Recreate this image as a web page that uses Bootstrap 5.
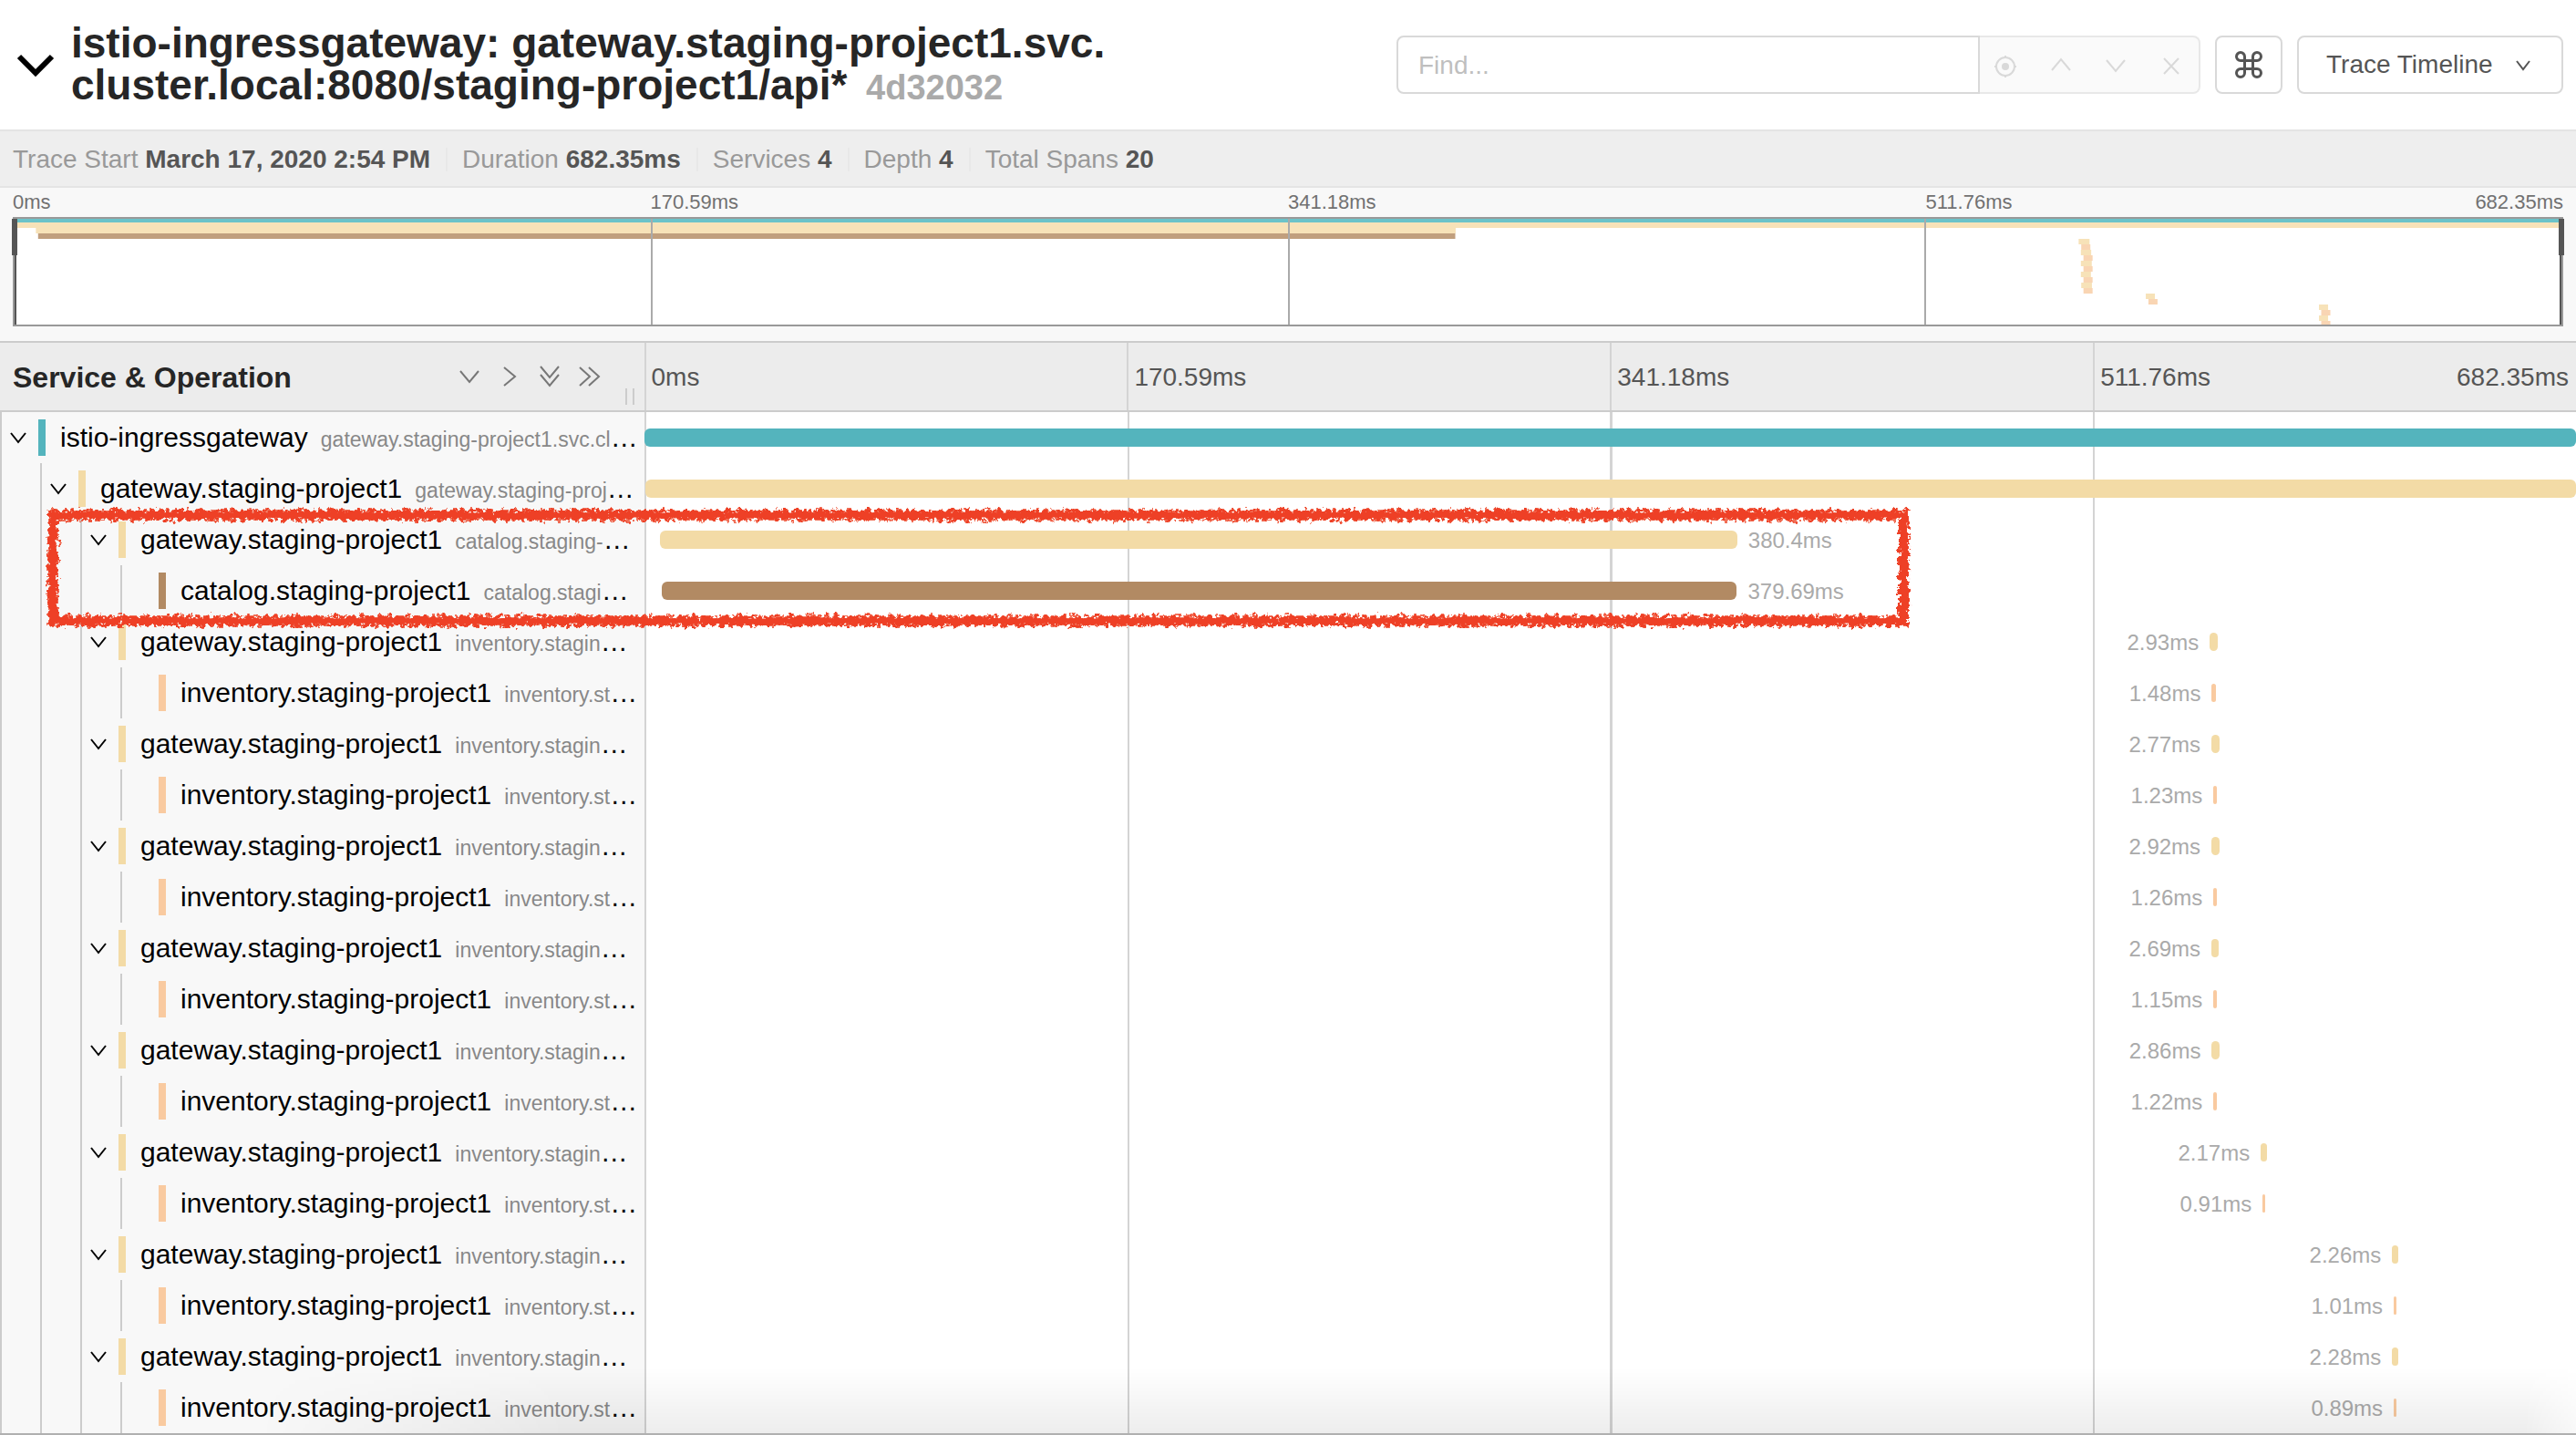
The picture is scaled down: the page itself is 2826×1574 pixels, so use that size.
<!DOCTYPE html>
<html lang="en">
<head>
<meta charset="utf-8">
<meta name="viewport" content="width=device-width, initial-scale=1">
<title>Trace Timeline</title>
<link href="https://cdn.jsdelivr.net/npm/bootstrap@5.3.0/dist/css/bootstrap.min.css" rel="stylesheet">
<style>
  body { font-family: "Liberation Sans", Arial, sans-serif; font-size: 28px; line-height: 36px; color: #000; background: #fff; overflow: hidden; }
  svg { display: block; flex: none; fill: none; stroke: currentColor; }
  .trace-head { height: 144px; padding: 0 14px 0 18px; border-bottom: 2px solid #e4e4e4; }
  .trace-title { font-size: 46px; line-height: 46px; font-weight: 700; color: #262626; margin: 0 0 0 18px; }
  .trace-id { font-size: 38px; color: #aaa; margin-left: 8px; }
  .toggle-btn { border: 0; background: none; padding: 0; color: inherit; }
  .find-group { width: 882px; height: 64px; }
  .find-group .form-control { font-size: 28px; padding: 2px 22px 0; border: 2px solid #d9d9d9; border-radius: 8px 0 0 8px; }
  .find-group .form-control::placeholder { color: #bfbfbf; }
  .find-tools { width: 242px; background: #fafafa; border: 2px solid #e8e8e8; border-left: 0; border-radius: 0 8px 8px 0; color: #d9d9d9; padding: 4px 16px 0 14px; }
  .find-tools button { width: 28px; }
  .tool-btn { height: 64px; font-size: 28px; border: 2px solid #d9d9d9; border-radius: 8px; color: #555; background: #fff; }
  .tool-btn.cmd { width: 74px; padding: 0; }
  .tool-btn.view { width: 292px; padding: 0 30px; }
  .trace-facts { height: 62px; padding: 2px 14px 0; background: #eee; border-bottom: 2px solid #e4e4e4; color: #999; }
  .trace-facts strong { color: #555; }
  .trace-facts li + li { border-left: 2px solid #e8e8e8; margin-left: 17px; padding-left: 16px; line-height: 26px; }
  .minimap { background: #f8f8f8; padding: 0 14px 16px; border-bottom: 2px solid #ccc; height: 170px; }
  .minimap-ticks { font-size: 22px; line-height: 32px; color: #717171; }
  .minimap-box { height: 120px; border: 2px solid #999; background: #fff; }
  .minimap-box svg { width: 100%; height: 116px; stroke: none; }
  .minimap-box .grip { width: 6px; height: 40px; background: #555; top: 0; }
  .minimap-box .grip-start { left: -3px; }
  .minimap-box .grip-end { right: -3px; }
  .minimap-box .edge { width: 2px; height: 116px; background: #555; top: 0; }
  .q { width: 25%; }
  .timeline-head { height: 76px; background: #ececec; border-bottom: 2px solid #ccc; color: #555; }
  .head-name { width: 25%; padding-left: 14px; }
  .head-name h2 { font-size: 32px; line-height: 40px; font-weight: 700; color: #262626; margin: 0; padding-top: 2px; }
  .head-icons { gap: 20px; margin-right: 48px; color: #777; }
  .resizer { width: 10px; height: 18px; right: 11px; bottom: 6px; border: solid #ccc; border-width: 0 2px; }
  .head-tick { border-left: 2px solid #d4d4d4; padding-left: 6px; line-height: 76px; }
  .span-row { height: 56px; }
  .span-name { width: 25%; background: #f8f8f8; font-size: 30px; }
  .indent { width: 44px; flex: none; border-left: 2px solid #ccc; }
  .indent.last { width: 42px; }
  .span-label { border-left: 8px solid; padding-left: 16px; line-height: 40px; height: 40px; margin-right: 6px; }
  .span-name .span-label { color: #000; }
  .span-label a { color: #000; text-decoration: none; }
  .span-label small { font-size: 23px; color: #888; margin-left: 14px; }
  .span-track { width: 75%; background: repeating-linear-gradient(to right, #d4d4d4 0 2px, #fff 2px 25%); }
  .span-bar { height: 20px; border-radius: 6px; flex: none; background: currentColor; }
  .span-time { font-size: 24px; color: #aaa; padding: 2px 12px 0; }
  .c-teal { color: #54b4bd; border-color: #54b4bd; }
  .c-sand { color: #f3dba6; border-color: #f3dba6; }
  .c-brown { color: #b28a63; border-color: #b28a63; }
  .c-peach { color: #f9caa0; border-color: #f9caa0; }
  .marker { left: 50px; right: 25.8%; top: 104px; height: 134px; pointer-events: none; }
  .marker svg { width: 100%; height: 100%; overflow: visible; }
  .floor-shade { left: 0; right: 0; bottom: 0; height: 72px; background: linear-gradient(#0000, #00000012); -webkit-mask-image: linear-gradient(to right, #0000 10%, #000 22%, #000 98%, #0006); pointer-events: none; }
  .floor-line { height: 2px; background: #b0b0b0; }
</style>
</head>
<body>
<header class="trace-head d-flex align-items-center">
  <button class="toggle-btn" aria-label="Collapse header"><svg width="42" height="28" stroke-width="6"><path d="M3 5 21 23 39 5"/></svg></button>
  <h1 class="trace-title">istio-ingressgateway: gateway.staging-project1.svc.<br>cluster.local:8080/staging-project1/api* <span class="trace-id">4d32032</span></h1>
  <div class="d-flex gap-3 ms-auto">
    <div class="find-group d-flex">
      <input class="form-control flex-fill rounded-end-0" type="text" placeholder="Find..." aria-label="Find">
      <div class="find-tools d-flex flex-shrink-0 align-items-center justify-content-between">
        <button class="toggle-btn" aria-label="Locate"><svg width="28" height="28" stroke-width="2"><circle cx="14" cy="14" r="10"/><circle cx="14" cy="14" r="4" fill="currentColor" stroke="none"/><path d="M14 2v3M14 23v3M2 14h3M23 14h3"/></svg></button>
        <button class="toggle-btn" aria-label="Previous match"><svg width="28" height="28" stroke-width="2"><path d="M4 18 14 6 24 18"/></svg></button>
        <button class="toggle-btn" aria-label="Next match"><svg width="28" height="28" stroke-width="2"><path d="M4 7 14 19 24 7"/></svg></button>
        <button class="toggle-btn" aria-label="Clear"><svg width="28" height="28" stroke-width="2"><path d="M6 5 22 22M22 5 6 22"/></svg></button>
      </div>
    </div>
    <button class="tool-btn cmd d-flex align-items-center justify-content-center" aria-label="Keyboard shortcuts"><svg width="30" height="30" viewBox="0 0 30 30" stroke-width="3"><path d="M10.500 10.500V6a4.500 4.500 0 1 0-4.500 4.500H24a4.500 4.500 0 1 0-4.500-4.500V24a4.500 4.500 0 1 0 4.500-4.500H6a4.500 4.500 0 1 0 4.500 4.500Z"/></svg></button>
    <button class="tool-btn view d-flex align-items-center justify-content-between">Trace Timeline<svg width="24" height="20" stroke-width="2"><path d="M5 6 12 15 19 6"/></svg></button>
  </div>
</header>

<ul class="trace-facts list-unstyled d-flex align-items-center mb-0">
  <li>Trace Start <strong>March 17, 2020 2:54 PM</strong></li>
  <li>Duration <strong>682.35ms</strong></li>
  <li>Services <strong>4</strong></li>
  <li>Depth <strong>4</strong></li>
  <li>Total Spans <strong>20</strong></li>
</ul>

<section class="minimap">
  <div class="minimap-ticks d-flex"><span class="q">0ms</span><span class="q">170.59ms</span><span class="q">341.18ms</span><span class="q d-flex justify-content-between"><span>511.76ms</span><span>682.35ms</span></span></div>
  <div class="minimap-box position-relative">
    <svg viewBox="0 0 2794 116" preserveAspectRatio="none" id="overview"></svg>
    <span class="edge position-absolute start-0"></span><span class="grip grip-start position-absolute"></span>
    <span class="edge position-absolute end-0"></span><span class="grip grip-end position-absolute"></span>
  </div>
</section>

<section class="timeline-head d-flex">
  <div class="head-name position-relative d-flex align-items-center">
    <h2>Service &amp; Operation</h2>
    <div class="head-icons d-flex ms-auto">
      <button class="toggle-btn" aria-label="Expand one"><svg width="24" height="24" stroke-width="2"><path d="M2 6 12 18 22 6"/></svg></button>
      <button class="toggle-btn" aria-label="Collapse one"><svg width="24" height="24" stroke-width="2"><path d="M6 2 18 12 6 22"/></svg></button>
      <button class="toggle-btn" aria-label="Expand all"><svg width="24" height="24" stroke-width="2"><path d="M2 1 12 13 22 1M2 10 12 22 22 10"/></svg></button>
      <button class="toggle-btn" aria-label="Collapse all"><svg width="24" height="24" stroke-width="2"><path d="M1 2 12 12 1 22M11 2 22 12 11 22"/></svg></button>
    </div>
    <span class="resizer position-absolute"></span>
  </div>
  <div class="d-flex w-75">
    <span class="q head-tick">0ms</span><span class="q head-tick">170.59ms</span><span class="q head-tick">341.18ms</span>
    <span class="q head-tick d-flex justify-content-between pe-2"><span>511.76ms</span><span>682.35ms</span></span>
  </div>
</section>

<main class="position-relative">
  <div id="spans"></div>
  <div class="marker position-absolute">
    <svg aria-hidden="true">
      <filter id="crayon" filterUnits="userSpaceOnUse" x="-10" y="-10" width="2100" height="160">
        <feTurbulence type="fractalNoise" baseFrequency="0.2" numOctaves="3" seed="4" result="n"/>
        <feDisplacementMap in="SourceGraphic" in2="n" scale="12" xChannelSelector="R" yChannelSelector="G" result="d"/>
        <feColorMatrix in="n" type="matrix" values="0 0 0 0 0  0 0 0 0 0  0 0 0 0 0  0 0 -10 0 7.600" result="holes"/>
        <feComposite in="d" in2="holes" operator="in" result="rough"/>
        <feMerge><feMergeNode in="rough"/><feMergeNode in="rough"/></feMerge>
      </filter>
      <g filter="url(#crayon)" stroke="#ee4026"><rect x="8" y="9" width="99.200%" height="116" stroke-width="11"/></g>
      <rect x="8" y="9" width="99.200%" height="116" stroke="#ee4026" stroke-width="5" stroke-dasharray="37 2 61 3 23 1"/>
    </svg>
  </div>
  <div class="floor-shade position-absolute"></div>
</main>
<div class="floor-line"></div>

<script src="https://cdn.jsdelivr.net/npm/bootstrap@5.3.0/dist/js/bootstrap.bundle.min.js"></script>
<script>
  const TOTAL = 682.35;
  const gw = 'gateway.staging-project1', inv = 'inventory.staging-project1', cat = 'catalog.staging-project1';
  const tail = '.svc.cluster.local:8080/*';
  // depth, service, operation, colour, start (ms), duration (ms)
  const spans = [
    [0, 'istio-ingressgateway', gw + tail, 'teal', 0, 682.35],
    [1, gw, gw + tail, 'sand', 0.6, 681.75],
    [2, gw, cat + tail, 'sand', 5.7, 380.4],
    [3, cat, cat + tail, 'brown', 6.3, 379.69]
  ];
  [[553, 2.93, 553.7, 1.48], [553.6, 2.77, 554.3, 1.23], [553.6, 2.92, 554.3, 1.26], [553.6, 2.69, 554.3, 1.15],
   [553.7, 2.86, 554.3, 1.22], [571, 2.17, 571.7, 0.91], [617.4, 2.26, 618, 1.01], [617.4, 2.28, 618, 0.89]]
  .forEach(([a, b, c, d]) => spans.push([2, gw, inv + tail, 'sand', a, b], [3, inv, inv + tail, 'peach', c, d]));

  const chevron = '<button class="toggle-btn d-flex w-100 h-100 align-items-center justify-content-center pe-1" aria-label="Collapse span"><svg width="20" height="16" stroke-width="2"><path d="M2 3 10 13 18 3"/></svg></button>';
  document.getElementById('spans').innerHTML = spans.map(([depth, svc, op, col, start, dur], i) => {
    const left = start / TOTAL * 100, width = dur / TOTAL * 100, label = i < 2 ? '' : dur + 'ms', before = left > 50;
    return '<div class="span-row d-flex"><div class="span-name d-flex align-items-center">' +
      '<span class="indent h-100"></span>'.repeat(depth) +
      '<span class="indent last h-100">' + (depth < 3 ? chevron : '') + '</span>' +
      '<div class="span-label text-truncate c-' + col + '"><a href="#">' + svc + '<small>' + op + '</small></a></div></div>' +
      '<div class="span-track d-flex align-items-center">' +
      '<span class="span-time flex-shrink-0 text-end' + (before ? '' : ' p-0') + '" style="width:' + left + '%">' + (before ? label : '') + '</span>' +
      '<span class="span-bar c-' + col + '" style="width:' + width + '%"></span>' +
      (before || !label ? '' : '<span class="span-time">' + label + '</span>') + '</div></div>';
  }).join('');

  const fills = { teal: '#6bc3c9', sand: '#f7e2b8', brown: '#c19f7e', peach: '#f9d5b3' };
  let art = '';
  spans.forEach(([, , , col, start, dur], i) => {
    const x = start / TOTAL * 2794, w = Math.max(10, dur / TOTAL * 2794);
    art += '<rect x="' + x + '" y="' + (i * 6 - (i ? 2 : 0)) + '" width="' + w + '" height="' + (i ? 6 : 4) + '" fill="' + fills[col] + '"/>';
  });
  [698, 1397, 2095].forEach(x => art += '<rect x="' + x + '" y="0" width="2" height="116" fill="#aaa"/>');
  document.getElementById('overview').innerHTML = art;
</script>
</body>
</html>
